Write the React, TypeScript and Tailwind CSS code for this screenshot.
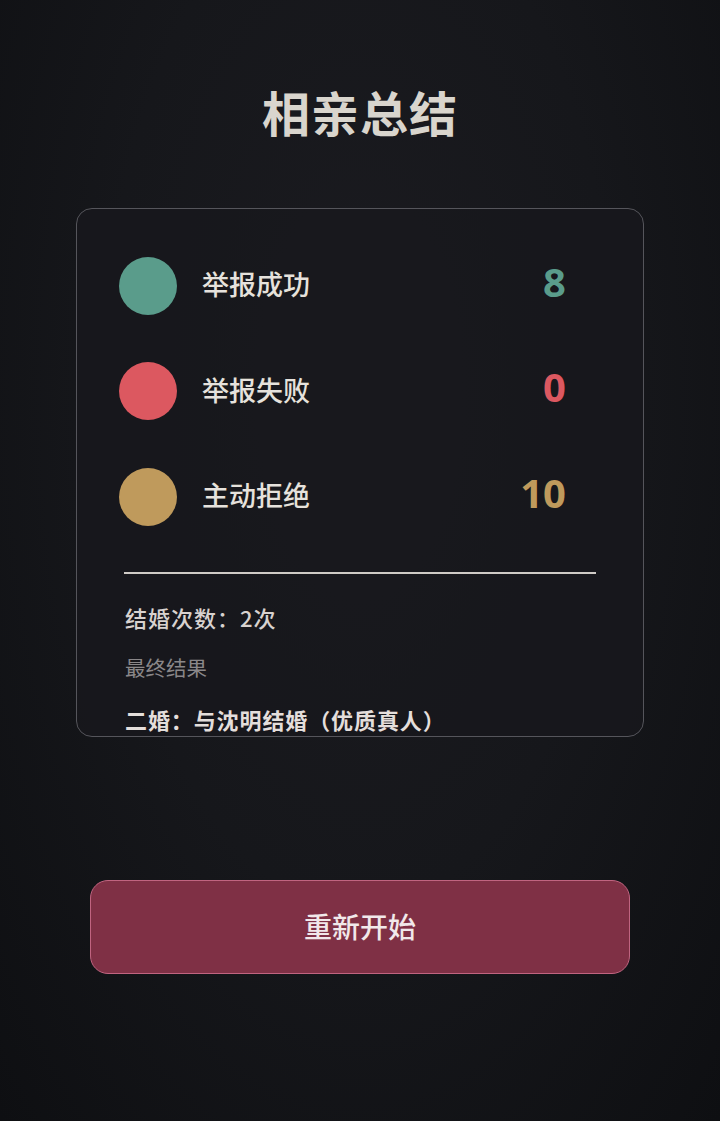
import React from "react";

const rows = [
  { label: "举报成功", value: "8", color: "bg-[#5a9c8b]", text: "text-[#5a9c8b]" },
  { label: "举报失败", value: "0", color: "bg-[#dc5860]", text: "text-[#dc5860]" },
  { label: "主动拒绝", value: "10", color: "bg-[#bf9a5c]", text: "text-[#bf9a5c]" },
];

export default function App() {
  return (
    <div
      className="w-[720px] h-[1121px] flex flex-col items-center bg-[radial-gradient(ellipse_at_50%_35%,#1b1b20_0%,#16171b_50%,#0e0f12_100%)]"
      style={{ fontFamily: '"Noto Sans CJK SC", "Noto Sans", sans-serif' }}
    >
      <h1 className="mt-[76px] h-[70px] leading-[70px] text-[48px] font-bold text-[#d9d5cd] tracking-[1px]">
        相亲总结
      </h1>
      <div className="mt-[62px] w-[568px] h-[529px] rounded-[16px] border-[1.5px] border-[#55555b] bg-[#18181d]/80 overflow-hidden flex flex-col">
        <div className="pt-[24px] flex flex-col">
          {rows.map((r) => (
            <div key={r.label} className="h-[105.5px] flex items-center pl-[42px] pr-[77px]">
              <div className={`w-[58px] h-[58px] rounded-full ${r.color}`} />
              <div className="ml-[25px] mb-[4px] text-[27px] font-medium text-[#e6e2dc] leading-none">{r.label}</div>
              <div
                className={`ml-auto mb-[8px] text-[40px] font-bold leading-none ${r.text}`}
                style={{ fontFamily: '"Noto Sans", "Noto Sans CJK SC", sans-serif' }}
              >
                {r.value}
              </div>
            </div>
          ))}
        </div>
        <div className="mx-[47px] mt-[22px] h-[2px] bg-[#cfcbc6]" />
        <div className="mx-[48px] mt-[28px] text-[22px] leading-[30px] font-medium tracking-[1px] text-[#d8d2cf]">结婚次数：2次</div>
        <div className="mx-[48px] mt-[20px] text-[20.5px] leading-[30px] text-[#8a8789]">最终结果</div>
        <div className="mx-[48px] mt-[22px] text-[22px] leading-[30px] font-bold tracking-[0.9px] text-[#e4dedb]">
          二婚：与沈明结婚（优质真人）
        </div>
      </div>
      <button className="mt-[143px] w-[540px] h-[94px] rounded-[18px] border-[1.5px] border-[#c06480] bg-[#7f3045] pb-[3px] text-[28px] text-[#f1e8ea] font-medium">
        重新开始
      </button>
    </div>
  );
}
